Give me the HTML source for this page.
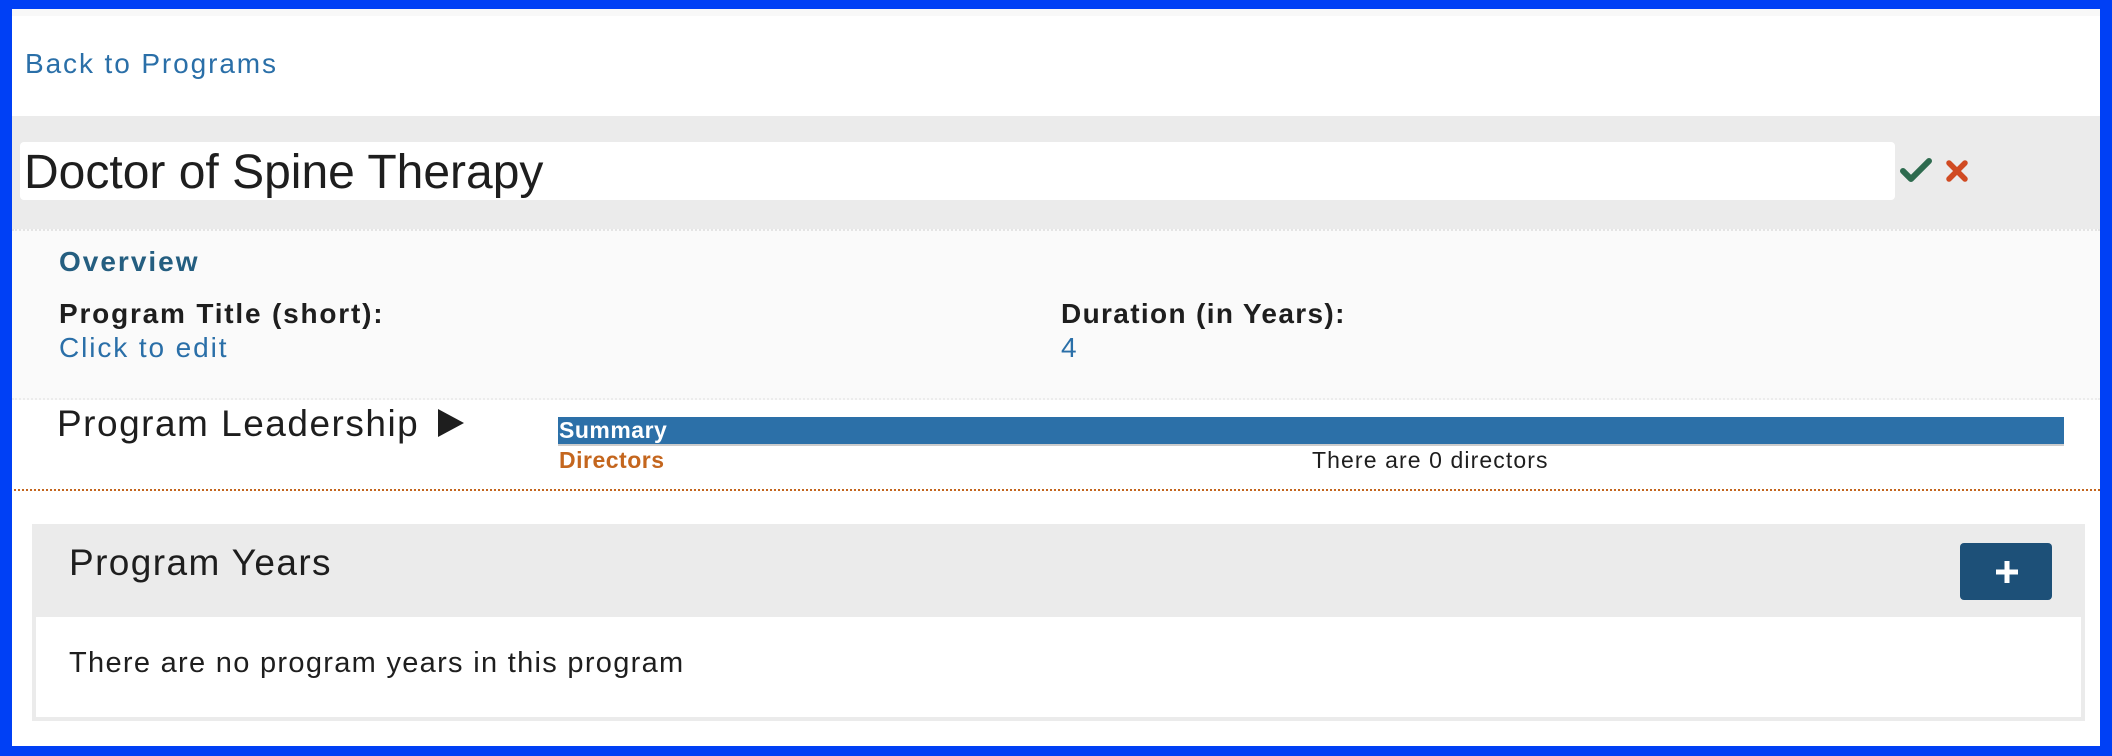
<!DOCTYPE html>
<html><head><meta charset="utf-8"><style>
*{margin:0;padding:0;box-sizing:border-box}
body{width:2112px;height:756px;position:relative;background:#0040f5;font-family:"Liberation Sans",sans-serif;overflow:hidden}
.inner{position:absolute;left:12px;top:9px;right:12px;bottom:10px;background:#fff}
.a{position:absolute;white-space:nowrap}
</style></head><body>
<div class="inner"></div>
<div class="a" style="left:12px;top:9px;width:2088px;height:7px;background:#f8f8f8"></div>
<div class="a" style="left:25px;top:48px;font-size:28px;letter-spacing:1.9px;color:#2a6fa8">Back to Programs</div>
<div class="a" style="left:12px;top:116px;width:2088px;height:113px;background:#ebebeb"></div>
<div class="a" style="left:20px;top:142px;width:1875px;height:58px;background:#fff;border-radius:4px"></div>
<div class="a" style="left:24px;top:145px;font-size:48px;color:#1e1e1e;line-height:56px">Doctor of Spine Therapy</div>
<svg class="a" style="left:1898px;top:156px" width="36" height="28" viewBox="0 0 36 28"><path d="M5 15 L13 23 L31 5" stroke="#2e6b4f" stroke-width="6" fill="none" stroke-linecap="round" stroke-linejoin="round"/></svg>
<svg class="a" style="left:1944px;top:158px" width="26" height="26" viewBox="0 0 26 26"><path d="M5 5 L21 21 M21 5 L5 21" stroke="#d04a22" stroke-width="5.5" stroke-linecap="round"/></svg>
<div class="a" style="left:12px;top:229px;width:2088px;height:171px;background:#fafafa;border-top:2px dotted #e4e4e4;border-bottom:2px dotted #ececec"></div>
<div class="a" style="left:59px;top:246px;font-size:28px;letter-spacing:2px;font-weight:bold;color:#245e80">Overview</div>
<div class="a" style="left:59px;top:298px;font-size:28px;letter-spacing:1.8px;font-weight:bold;color:#1e1e1e">Program Title (short):</div>
<div class="a" style="left:59px;top:332px;font-size:28px;letter-spacing:1.9px;color:#2a6fa8">Click to edit</div>
<div class="a" style="left:1061px;top:298px;font-size:28px;letter-spacing:1.35px;font-weight:bold;color:#1e1e1e">Duration (in Years):</div>
<div class="a" style="left:1061px;top:332px;font-size:28px;color:#2a6fa8">4</div>
<div class="a" style="left:57px;top:403px;font-size:37px;letter-spacing:1.5px;color:#1e1e1e">Program Leadership</div>
<svg class="a" style="left:436px;top:408px" width="30" height="30" viewBox="0 0 30 30"><path d="M2 1 L28 15 L2 29Z" fill="#1e1e1e"/></svg>
<div class="a" style="left:558px;top:417px;width:1506px;height:29px;background:#2c70a8;border-bottom:2px solid #ccc"></div>
<div class="a" style="left:559px;top:417px;font-size:23px;letter-spacing:0.5px;font-weight:bold;color:#fff;line-height:26px">Summary</div>
<div class="a" style="left:559px;top:447px;font-size:23px;letter-spacing:0.5px;font-weight:bold;color:#c4661e;line-height:26px">Directors</div>
<div class="a" style="left:1312px;top:447px;font-size:23px;letter-spacing:1.1px;color:#1e1e1e;line-height:26px">There are 0 directors</div>
<div class="a" style="left:14px;top:489px;width:2086px;height:0;border-top:2px dotted #c4661e"></div>
<div class="a" style="left:32px;top:524px;width:2053px;height:197px;background:#ebebeb"></div>
<div class="a" style="left:36px;top:617px;width:2045px;height:100px;background:#fff"></div>
<div class="a" style="left:69px;top:542px;font-size:37px;letter-spacing:1.4px;color:#1e1e1e">Program Years</div>
<div class="a" style="left:1960px;top:543px;width:92px;height:57px;background:#1d5078;border-radius:4px"></div>
<svg class="a" style="left:1992px;top:557px" width="30" height="30" viewBox="0 0 30 30"><path d="M15 4 V26 M4 15 H26" stroke="#fff" stroke-width="5"/></svg>
<div class="a" style="left:69px;top:647px;font-size:29px;letter-spacing:1.3px;color:#1e1e1e">There are no program years in this program</div>
</body></html>
